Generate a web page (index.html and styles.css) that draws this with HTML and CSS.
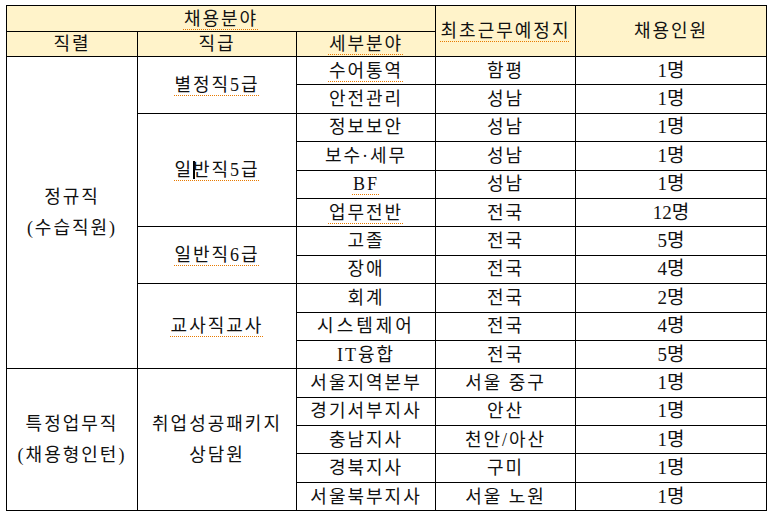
FILE: index.html
```html
<!DOCTYPE html>
<html lang="ko">
<head>
<meta charset="utf-8">
<link rel="stylesheet" href="styles.css">
</head>
<body>
<table class="recruit">
  <colgroup>
    <col class="c1"><col class="c2"><col class="c3"><col class="c4"><col class="c5">
  </colgroup>
  <thead>
    <tr class="h1">
      <th colspan="3"><span class="sp">채용분야</span></th>
      <th rowspan="2"><span class="sp">최초근무예정지</span></th>
      <th rowspan="2">채용인원</th>
    </tr>
    <tr class="h2">
      <th>직렬</th>
      <th>직급</th>
      <th><span class="sp">세부분야</span></th>
    </tr>
  </thead>
  <tbody>
    <tr>
      <td rowspan="11" class="two">정규직<br>(수습직원)</td>
      <td rowspan="2"><span class="sp">별정직5급</span></td>
      <td><span class="sp">수어통역</span></td><td>함평</td><td class="num">1명</td>
    </tr>
    <tr><td>안전관리</td><td>성남</td><td class="num">1명</td></tr>
    <tr>
      <td rowspan="4"><span class="sp">일<span class="caret"></span>반직5급</span></td>
      <td>정보보안</td><td>성남</td><td class="num">1명</td>
    </tr>
    <tr><td>보수·세무</td><td>성남</td><td class="num">1명</td></tr>
    <tr><td><span class="sp">BF</span></td><td>성남</td><td class="num">1명</td></tr>
    <tr><td><span class="sp">업무전반</span></td><td>전국</td><td class="num">12명</td></tr>
    <tr>
      <td rowspan="2"><span class="sp">일반직6급</span></td>
      <td>고졸</td><td>전국</td><td class="num">5명</td>
    </tr>
    <tr><td>장애</td><td>전국</td><td class="num">4명</td></tr>
    <tr>
      <td rowspan="3"><span class="sp">교사직교사</span></td>
      <td>회계</td><td>전국</td><td class="num">2명</td>
    </tr>
    <tr><td class="wide">시스템제어</td><td>전국</td><td class="num">4명</td></tr>
    <tr><td>IT융합</td><td>전국</td><td class="num">5명</td></tr>
    <tr>
      <td rowspan="5" class="two">특정업무직<br>(채용형인턴)</td>
      <td rowspan="5" class="two">취업성공패키지<br>상담원</td>
      <td>서울지역본부</td><td>서울 중구</td><td class="num">1명</td>
    </tr>
    <tr><td>경기서부지사</td><td>안산</td><td class="num">1명</td></tr>
    <tr><td>충남지사</td><td>천안/아산</td><td class="num">1명</td></tr>
    <tr><td>경북지사</td><td>구미</td><td class="num">1명</td></tr>
    <tr><td>서울북부지사</td><td>서울 노원</td><td class="num">1명</td></tr>
  </tbody>
</table>
</body>
</html>
```

FILE: styles.css
```css
html, body {
  margin: 0;
  padding: 0;
  background: #ffffff;
}

body {
  padding: 5px 0 0 6px;
  font-family: "Liberation Serif", "Noto Sans CJK KR", serif;
  color: #111111;
}

.recruit {
  border-collapse: collapse;
  table-layout: fixed;
  width: 760px;
  font-size: 18px;
}

.c1 { width: 131px; }
.c2 { width: 159px; }
.c3 { width: 139px; }
.c4 { width: 140px; }
.c5 { width: 191px; }

.recruit th,
.recruit td {
  border: 1px solid #000000;
  padding: 0;
  text-align: center;
  vertical-align: middle;
  font-weight: normal;
  line-height: 22px;
  letter-spacing: 2px;
  white-space: nowrap;
}

.recruit th {
  background: #fff3ca;
}

.h1 th { height: 25px; }
.h2 th { height: 24px; }

.recruit tbody tr { height: 28.4px; }

.recruit td.two {
  line-height: 31px;
}

.recruit td.wide {
  letter-spacing: 3px;
}

.recruit td.num {
  letter-spacing: 0;
  font-size: 19px;
}

.sp {
  text-decoration: underline dotted #e87a00;
  text-underline-offset: 4px;
  text-decoration-thickness: 1px;
}

.caret {
  display: inline-block;
  width: 0;
  height: 18px;
  border-left: 2px solid #000000;
  vertical-align: -3px;
  margin-right: -2px;
}
```
